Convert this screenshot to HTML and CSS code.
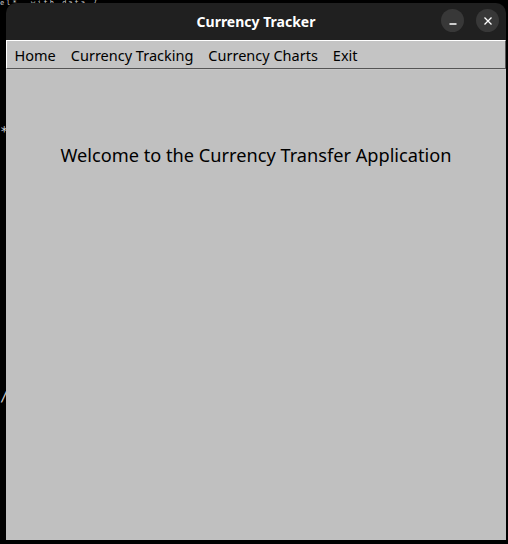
FILE: index.html
```html
<!DOCTYPE html>
<html>
<head>
<meta charset="utf-8">
<link rel="stylesheet" href="styles.css">
</head>
<body>
<div class="bgtext t1">el* &nbsp;with data {</div>
<div class="bgtext t2">*</div>
<div class="bgtext t3">/</div>
<div class="window">
  <div class="titlebar">
    <span class="title">Currency Tracker</span>
    <div class="controls">
      <span class="btn">
        <svg width="10" height="10" viewBox="0 0 10 10"><path d="M1.5 8H8.5" stroke="#fff" stroke-width="1.3"/></svg>
      </span>
      <span class="btn">
        <svg width="10" height="10" viewBox="0 0 10 10"><path d="M1.5 1.5L8.5 8.5M8.5 1.5L1.5 8.5" stroke="#fff" stroke-width="1.3"/></svg>
      </span>
    </div>
  </div>
  <div class="menubar">
    <span class="item">Home</span>
    <span class="item">Currency Tracking</span>
    <span class="item">Currency Charts</span>
    <span class="item">Exit</span>
  </div>
  <div class="content">
    <p class="welcome">Welcome to the Currency Transfer Application</p>
  </div>
</div>
</body>
</html>
```
FILE: styles.css
```css
html, body {
  margin: 0;
  padding: 0;
}
body {
  width: 508px;
  height: 544px;
  background: #000;
  overflow: hidden;
  position: relative;
  font-family: "Noto Sans", "Open Sans", sans-serif;
}
.bgtext {
  position: absolute;
  color: #cfcfcf;
  font-family: "DejaVu Sans Mono", monospace;
  font-size: 14px;
  line-height: 14px;
}
.t1 { left: 0; top: 0; font-size: 7px; line-height: 7px; letter-spacing: 2px; }
.t2 { left: 0; top: 124px; }
.t3 { left: 0; top: 389px; }
.window {
  position: relative;
  margin: 3px 0 0 6px;
  width: 500px;
  height: 537px;
  display: flex;
  flex-direction: column;
  border-radius: 10px 10px 0 0;
  overflow: hidden;
}
.titlebar {
  height: 37px;
  flex: none;
  background: #202020;
  display: flex;
  align-items: center;
  justify-content: center;
  position: relative;
}
.title {
  color: #fff;
  font-weight: bold;
  font-size: 14px;
  margin-top: -1px;
}
.controls {
  position: absolute;
  right: 7px;
  top: 6px;
  display: flex;
  gap: 12px;
}
.btn {
  width: 23px;
  height: 23px;
  border-radius: 50%;
  background: #383838;
  display: flex;
  align-items: center;
  justify-content: center;
}
.menubar {
  flex: none;
  height: 27px;
  background: #c4c4c4;
  border-top: 1px solid #fff;
  border-left: 1px solid #fff;
  border-bottom: 1px solid #555;
  border-right: 1px solid #555;
  display: flex;
  align-items: center;
}
.item {
  font-size: 14.5px;
  color: #000;
  padding: 0 7.5px;
}
.content {
  flex: 1;
  background: #c0c0c0;
  border-top: 1px solid #c8c8c8;
}
.welcome {
  margin: 73px 0 0;
  text-align: center;
  font-size: 18.2px;
  color: #000;
}
```
